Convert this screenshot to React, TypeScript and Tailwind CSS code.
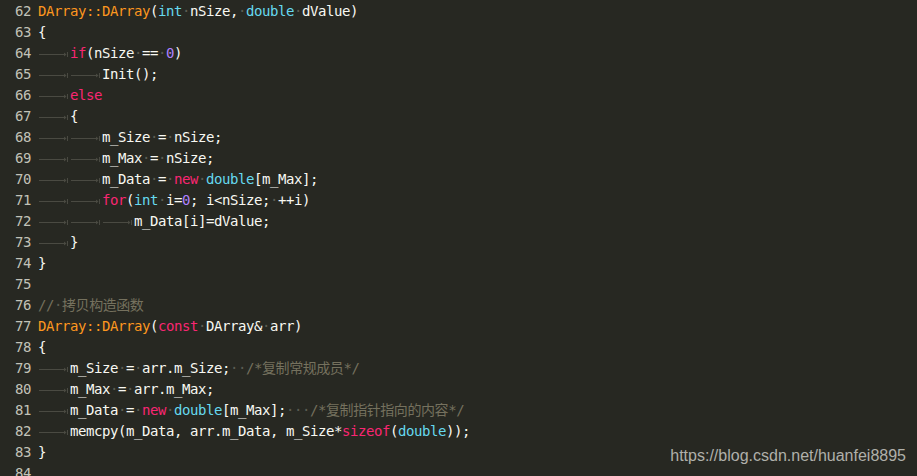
type Seg = [string, string]

const D = '#f8f8f2'
const KW = '#f92672'
const TY = '#66d9ef'
const FN = '#fd971f'
const NUM = '#ae81ff'
const CM = '#75715e'

// "·" marks a visible whitespace dot, "\t" a tab arrow
const lines: { n: number; segs: Seg[] }[] = [
  { n: 62, segs: [['DArray::DArray', FN], ['(', D], ['int', TY], ['·nSize,·', D], ['double', TY], ['·dValue)', D]] },
  { n: 63, segs: [['{', D]] },
  { n: 64, segs: [['\t', D], ['if', KW], ['(nSize·==·', D], ['0', NUM], [')', D]] },
  { n: 65, segs: [['\t\t', D], ['Init();', D]] },
  { n: 66, segs: [['\t', D], ['else', KW]] },
  { n: 67, segs: [['\t', D], ['{', D]] },
  { n: 68, segs: [['\t\t', D], ['m_Size·=·nSize;', D]] },
  { n: 69, segs: [['\t\t', D], ['m_Max·=·nSize;', D]] },
  { n: 70, segs: [['\t\t', D], ['m_Data·=·', D], ['new', KW], ['·', D], ['double', TY], ['[m_Max];', D]] },
  { n: 71, segs: [['\t\t', D], ['for', KW], ['(', D], ['int', TY], ['·i=', D], ['0', NUM], ['; i<nSize;·++i)', D]] },
  { n: 72, segs: [['\t\t\t', D], ['m_Data[i]=dValue;', D]] },
  { n: 73, segs: [['\t', D], ['}', D]] },
  { n: 74, segs: [['}', D]] },
  { n: 75, segs: [] },
  { n: 76, segs: [['//·拷贝构造函数', CM]] },
  { n: 77, segs: [['DArray::DArray', FN], ['(', D], ['const', KW], ['·DArray&·arr)', D]] },
  { n: 78, segs: [['{', D]] },
  { n: 79, segs: [['\t', D], ['m_Size·=·arr.m_Size;··', D], ['/*复制常规成员*/', CM]] },
  { n: 80, segs: [['\t', D], ['m_Max·=·arr.m_Max;', D]] },
  { n: 81, segs: [['\t', D], ['m_Data·=·', D], ['new', KW], ['·', D], ['double', TY], ['[m_Max];···', D], ['/*复制指针指向的内容*/', CM]] },
  { n: 82, segs: [['\t', D], ['memcpy(m_Data, arr.m_Data, m_Size*', D], ['sizeof', KW], ['(', D], ['double', TY], ['));', D]] },
  { n: 83, segs: [['}', D]] },
  { n: 84, segs: [] },
]

function Tab() {
  return (
    <span className="inline-block w-[32px] h-[21px] align-top">
      <svg width="32" height="21" viewBox="0 0 32 21">
        <line x1="1" y1="11.5" x2="28" y2="11.5" stroke="#4a4a42" strokeWidth="1" />
        <path d="M26 9.5 L28.5 11.5 L26 13.5 Z" fill="#4a4a42" />
        <line x1="29.5" y1="9" x2="29.5" y2="14" stroke="#4a4a42" strokeWidth="1" />
      </svg>
    </span>
  )
}

function Text({ text, color }: { text: string; color: string }) {
  const parts = text.split(/(·|\t)/)
  return (
    <>
      {parts.map((p, i) => {
        if (p === '\t') return <Tab key={i} />
        if (p === '·')
          return (
            <span key={i} className="text-[#5c5c52]">
              ·
            </span>
          )
        if (!p) return null
        return (
          <span key={i} style={{ color }}>
            {p}
          </span>
        )
      })}
    </>
  )
}

export default function App() {
  return (
    <div className="relative w-[917px] h-[476px] overflow-hidden bg-[#272822]">
      <div className="pt-[1px] font-['DejaVu_Sans_Mono','Noto_Sans_CJK_SC',monospace] text-[14px] tracking-[-0.43px] leading-[21px]">
        {lines.map((l) => (
          <div key={l.n} className="flex h-[21px] whitespace-pre">
            <span className="w-[38px] pl-[15px] text-[#c2c2b8]">{l.n}</span>
            <span className="flex-1">
              {l.segs.map(([t, c], i) => (
                <Text key={i} text={t} color={c} />
              ))}
            </span>
          </div>
        ))}
      </div>
      <div className="absolute right-[11px] top-[446px] font-['Liberation_Sans',Arial,sans-serif] text-[16px] leading-[20px] text-[#b0b0aa]">
        https://blog.csdn.net/huanfei8895
      </div>
    </div>
  )
}
